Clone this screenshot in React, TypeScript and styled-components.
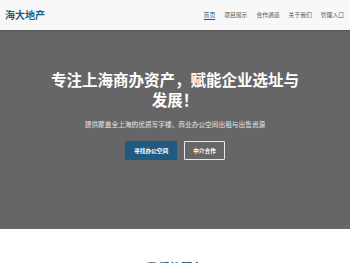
import React from "react";
import styled, { createGlobalStyle } from "styled-components";

const GlobalStyle = createGlobalStyle`
  * {
    box-sizing: border-box;
  }
  body {
    margin: 0;
    background: #fff;
    font-family: "Noto Sans CJK SC", "Noto Sans", sans-serif;
  }
`;

const navItems = ["首页", "项目展示", "合作通道", "关于我们", "管理入口"];

const App: React.FC = () => {
  return (
    <>
      <GlobalStyle />
      <Header>
        <Logo>海大地产</Logo>
        <Nav>
          {navItems.map((item, i) => (
            <NavItem key={item} $active={i === 0}>
              {item}
            </NavItem>
          ))}
        </Nav>
      </Header>
      <Hero>
        <HeroTitle>专注上海商办资产，赋能企业选址与发展！</HeroTitle>
        <HeroText>提供覆盖全上海的优质写字楼、商业办公空间出租与出售资源</HeroText>
        <ButtonRow>
          <Button $primary>寻找办公空间</Button>
          <Button>中介合作</Button>
        </ButtonRow>
      </Hero>
      <Section>
        <SectionTitle>我们的服务</SectionTitle>
      </Section>
    </>
  );
};

export default App;

const Header = styled.header`
  position: relative;
  z-index: 1;
  display: flex;
  align-items: center;
  justify-content: space-between;
  height: 30px;
  padding: 0 6px 0 5px;
  background: #f8f8f8;
  box-shadow: 0 1px 2px rgba(0, 0, 0, 0.15);
`;

const Logo = styled.div`
  color: #1e5a82;
  font-size: 10px;
  font-weight: 700;
  line-height: 1;
  letter-spacing: 0;
`;

const Nav = styled.nav`
  display: flex;
  align-items: center;
  gap: 9px;
`;

const NavItem = styled.a<{ $active?: boolean }>`
  display: block;
  padding: 2px 0 1px;
  font-size: 5.8px;
  line-height: 1.2;
  color: ${(p) => (p.$active ? "#1e5a82" : "#555")};
  border-bottom: 1px solid ${(p) => (p.$active ? "#1e5a82" : "transparent")};
  cursor: pointer;
`;

const Hero = styled.section`
  display: flex;
  flex-direction: column;
  align-items: center;
  height: 199px;
  padding-top: 40px;
  background: #666666;
  text-align: center;
`;

const HeroTitle = styled.h1`
  max-width: 256px;
  margin: 0;
  color: #fff;
  font-size: 15.5px;
  font-weight: 700;
  line-height: 19.5px;
`;

const HeroText = styled.p`
  margin: 11px 0 0;
  color: #e6e6e6;
  font-size: 6.7px;
  line-height: 9px;
`;

const ButtonRow = styled.div`
  display: flex;
  gap: 7px;
  margin-top: 12px;
`;

const Button = styled.button<{ $primary?: boolean }>`
  height: 19px;
  padding: 0 8px;
  font-family: inherit;
  font-size: 5.7px;
  font-weight: 700;
  color: #fff;
  background: ${(p) => (p.$primary ? "#1e5a82" : "transparent")};
  border: 1px solid ${(p) => (p.$primary ? "#1e5a82" : "#e8e8e8")};
  border-radius: 1px;
  cursor: pointer;
`;

const Section = styled.section`
  display: flex;
  justify-content: center;
  padding-top: 31.5px;
  background: #fff;
`;

const SectionTitle = styled.h2`
  margin: 0;
  color: #1e5a82;
  font-size: 11.5px;
  font-weight: 700;
  line-height: 1.2;
`;
